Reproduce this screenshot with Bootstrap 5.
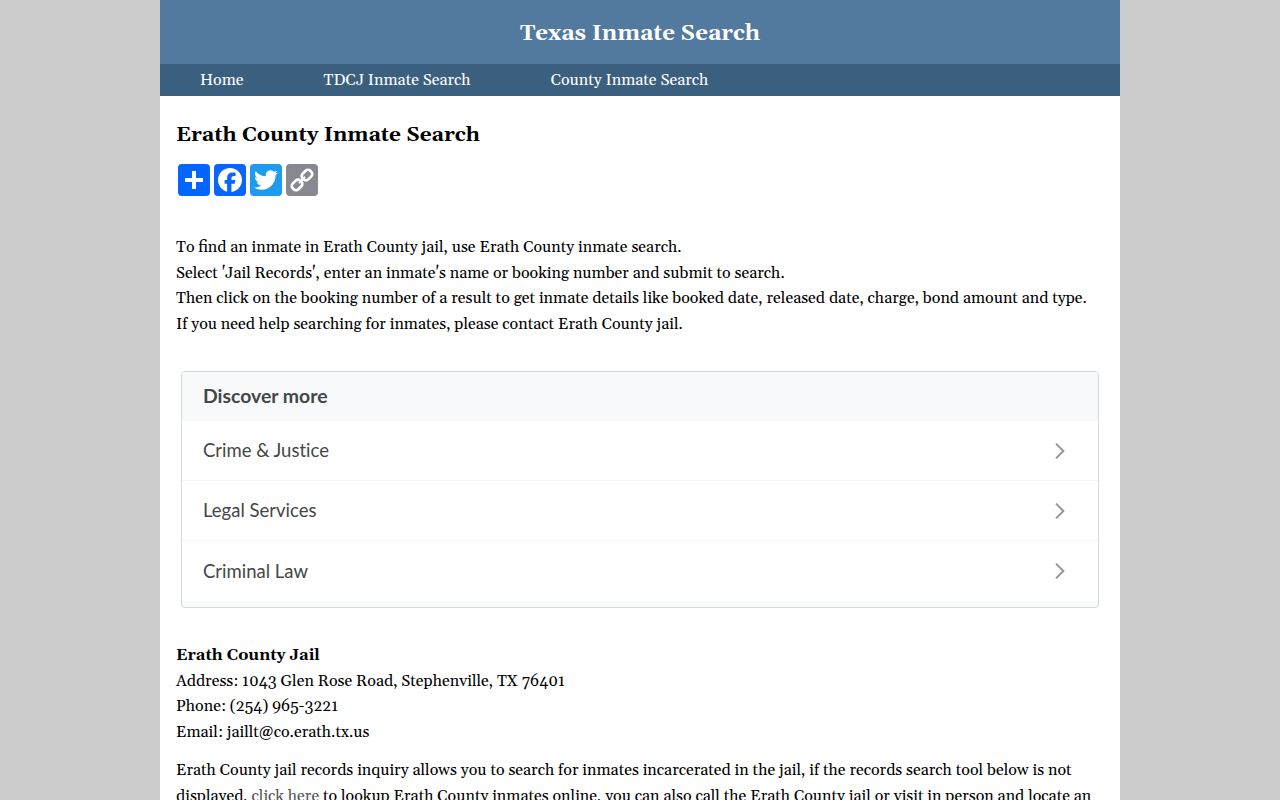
<!DOCTYPE html>
<html lang="en">
<head>
<meta charset="utf-8">
<meta name="viewport" content="width=device-width, initial-scale=1">
<title>Erath County Inmate Search</title>
<link href="https://cdn.jsdelivr.net/npm/bootstrap@5.3.0/dist/css/bootstrap.min.css" rel="stylesheet">
<style>
body { background: #ccc; color: #000; font: 16px/25.6px Gelasio, Georgia, "Liberation Serif", serif; height: 100vh; overflow: hidden; }
.page { width: 960px; min-height: 100vh; }
.site-head { background: #52799e; height: 64px; padding-top: 3px; }
.site-head h1 { font-size: 22.4px; font-weight: 700; line-height: 32px; }
.site-nav { background: #3b5f7f; height: 32px; }
.site-nav .nav-link { color: #fff; padding: 0 40px; line-height: 32px; }
.page-title { font-size: 20.8px; font-weight: 700; line-height: 32px; margin: 0; padding: 23px 0 13px; }
.share { gap: 4px; padding-left: 2px; margin-bottom: 39px; }
.share a { width: 32px; height: 32px; border-radius: 4px; }
.share svg { width: 32px; height: 32px; display: block; }
.share-any { background: #0166ff; }
.share-fb { background: #0866ff; }
.share-tw { background: #1d9bf0; }
.share-copy { background: #888990; }
.discover { --bs-card-border-color: #d5dadf; --bs-card-border-radius: 4px; --bs-card-inner-border-radius: 3px; margin: 34px 5px 34.6px; font-family: Lato, sans-serif; font-variant-ligatures: none; font-size: 18.5px; padding-bottom: 6px; background: #f7f9fb; }
.discover .card-header { background: #f7f9fb; border: 0; height: 49px; padding: 0 21px; font-size: 19.4px; font-weight: 700; line-height: 48px; color: #444746; }
.discover .list-group-item { height: 60px; padding: 0 32px 0 21px; border-color: #f4f5f6; color: #444746; }
.body-link { color: #555; text-decoration: none; }
.intro { margin-top: 12.8px; }
</style>
</head>
<body>
<div class="page bg-white mx-auto">
  <header class="site-head d-flex align-items-center justify-content-center text-white"><h1 class="m-0">Texas Inmate Search</h1></header>
  <nav class="site-nav nav">
    <a class="nav-link" href="#">Home</a>
    <a class="nav-link" href="#">TDCJ Inmate Search</a>
    <a class="nav-link" href="#">County Inmate Search</a>
  </nav>
  <main class="px-3 text-nowrap">
    <h2 class="page-title">Erath County Inmate Search</h2>
    <div class="share d-flex">
      <a href="#" aria-label="Share" class="share-any"><svg viewBox="0 0 32 32" fill="#fff"><path d="M14 7h4v18h-4z"/><path d="M7 14h18v4H7z"/></svg></a>
      <a href="#" aria-label="Facebook" class="share-fb"><svg viewBox="0 0 32 32" fill="#fff"><path d="M28 16c0-6.627-5.373-12-12-12S4 9.373 4 16c0 5.628 3.875 10.35 9.101 11.647v-7.98h-2.474V16H13.1v-1.58c0-4.085 1.849-5.978 5.859-5.978.76 0 2.072.15 2.608.298v3.325c-.283-.03-.775-.045-1.386-.045-1.967 0-2.728.745-2.728 2.683V16h3.92l-.673 3.667h-3.247v8.245C23.395 27.195 28 22.135 28 16"/></svg></a>
      <a href="#" aria-label="Twitter" class="share-tw"><svg viewBox="0 0 32 32" fill="#fff"><path d="M28 8.557a10 10 0 0 1-2.828.775 4.93 4.93 0 0 0 2.166-2.725 9.7 9.7 0 0 1-3.13 1.194 4.92 4.92 0 0 0-3.593-1.55 4.924 4.924 0 0 0-4.794 6.049c-4.09-.21-7.72-2.17-10.15-5.15a4.94 4.94 0 0 0-.665 2.477c0 1.71.87 3.214 2.19 4.1a5 5 0 0 1-2.23-.616v.06c0 2.39 1.7 4.38 3.952 4.83-.414.115-.85.174-1.297.174q-.476-.001-.928-.086a4.935 4.935 0 0 0 4.6 3.42 9.9 9.9 0 0 1-6.114 2.107q-.597 0-1.175-.068a13.95 13.95 0 0 0 7.55 2.213c9.056 0 14.01-7.507 14.01-14.013q0-.32-.015-.637c.96-.695 1.795-1.56 2.455-2.55z"/></svg></a>
      <a href="#" aria-label="Copy link" class="share-copy"><svg viewBox="0 0 32 32" fill="none" stroke="#fff" stroke-width="2.7"><g transform="rotate(-45 16 16)"><rect x="3.6" y="12" width="10.8" height="8" rx="3.3"/><rect x="17.6" y="12" width="10.8" height="8" rx="3.3"/><path d="M12.5 16h7" stroke-width="2.2" stroke-linecap="round"/></g></svg></a>
    </div>
    <p class="m-0">To find an inmate in Erath County jail, use Erath County inmate search.<br>Select 'Jail Records', enter an inmate's name or booking number and submit to search.<br>Then click on the booking number of a result to get inmate details like booked date, released date, charge, bond amount and type.<br>If you need help searching for inmates, please contact Erath County jail.</p>
    <section class="card discover">
      <div class="card-header">Discover more</div>
      <div class="list-group list-group-flush">
        <a href="#" class="list-group-item d-flex align-items-center justify-content-between">Crime &amp; Justice<svg width="12" height="18" viewBox="0 0 12 18" fill="none" stroke="#949699" stroke-width="2"><path d="M2 1.6 9.4 9 2 16.4"/></svg></a>
        <a href="#" class="list-group-item d-flex align-items-center justify-content-between">Legal Services<svg width="12" height="18" viewBox="0 0 12 18" fill="none" stroke="#949699" stroke-width="2"><path d="M2 1.6 9.4 9 2 16.4"/></svg></a>
        <a href="#" class="list-group-item d-flex align-items-center justify-content-between">Criminal Law<svg width="12" height="18" viewBox="0 0 12 18" fill="none" stroke="#949699" stroke-width="2"><path d="M2 1.6 9.4 9 2 16.4"/></svg></a>
      </div>
    </section>
    <p class="m-0"><strong>Erath County Jail</strong><br>Address: 1043 Glen Rose Road, Stephenville, TX 76401<br>Phone: (254) 965-3221<br>Email: jaillt@co.erath.tx.us</p>
    <p class="intro mb-0">Erath County jail records inquiry allows you to search for inmates incarcerated in the jail, if the records search tool below is not<br>displayed, <a class="body-link" href="#">click here</a> to lookup Erath County inmates online, you can also call the Erath County jail or visit in person and locate an</p>
  </main>
</div>
<script src="https://cdn.jsdelivr.net/npm/bootstrap@5.3.0/dist/js/bootstrap.bundle.min.js"></script>
</body>
</html>
